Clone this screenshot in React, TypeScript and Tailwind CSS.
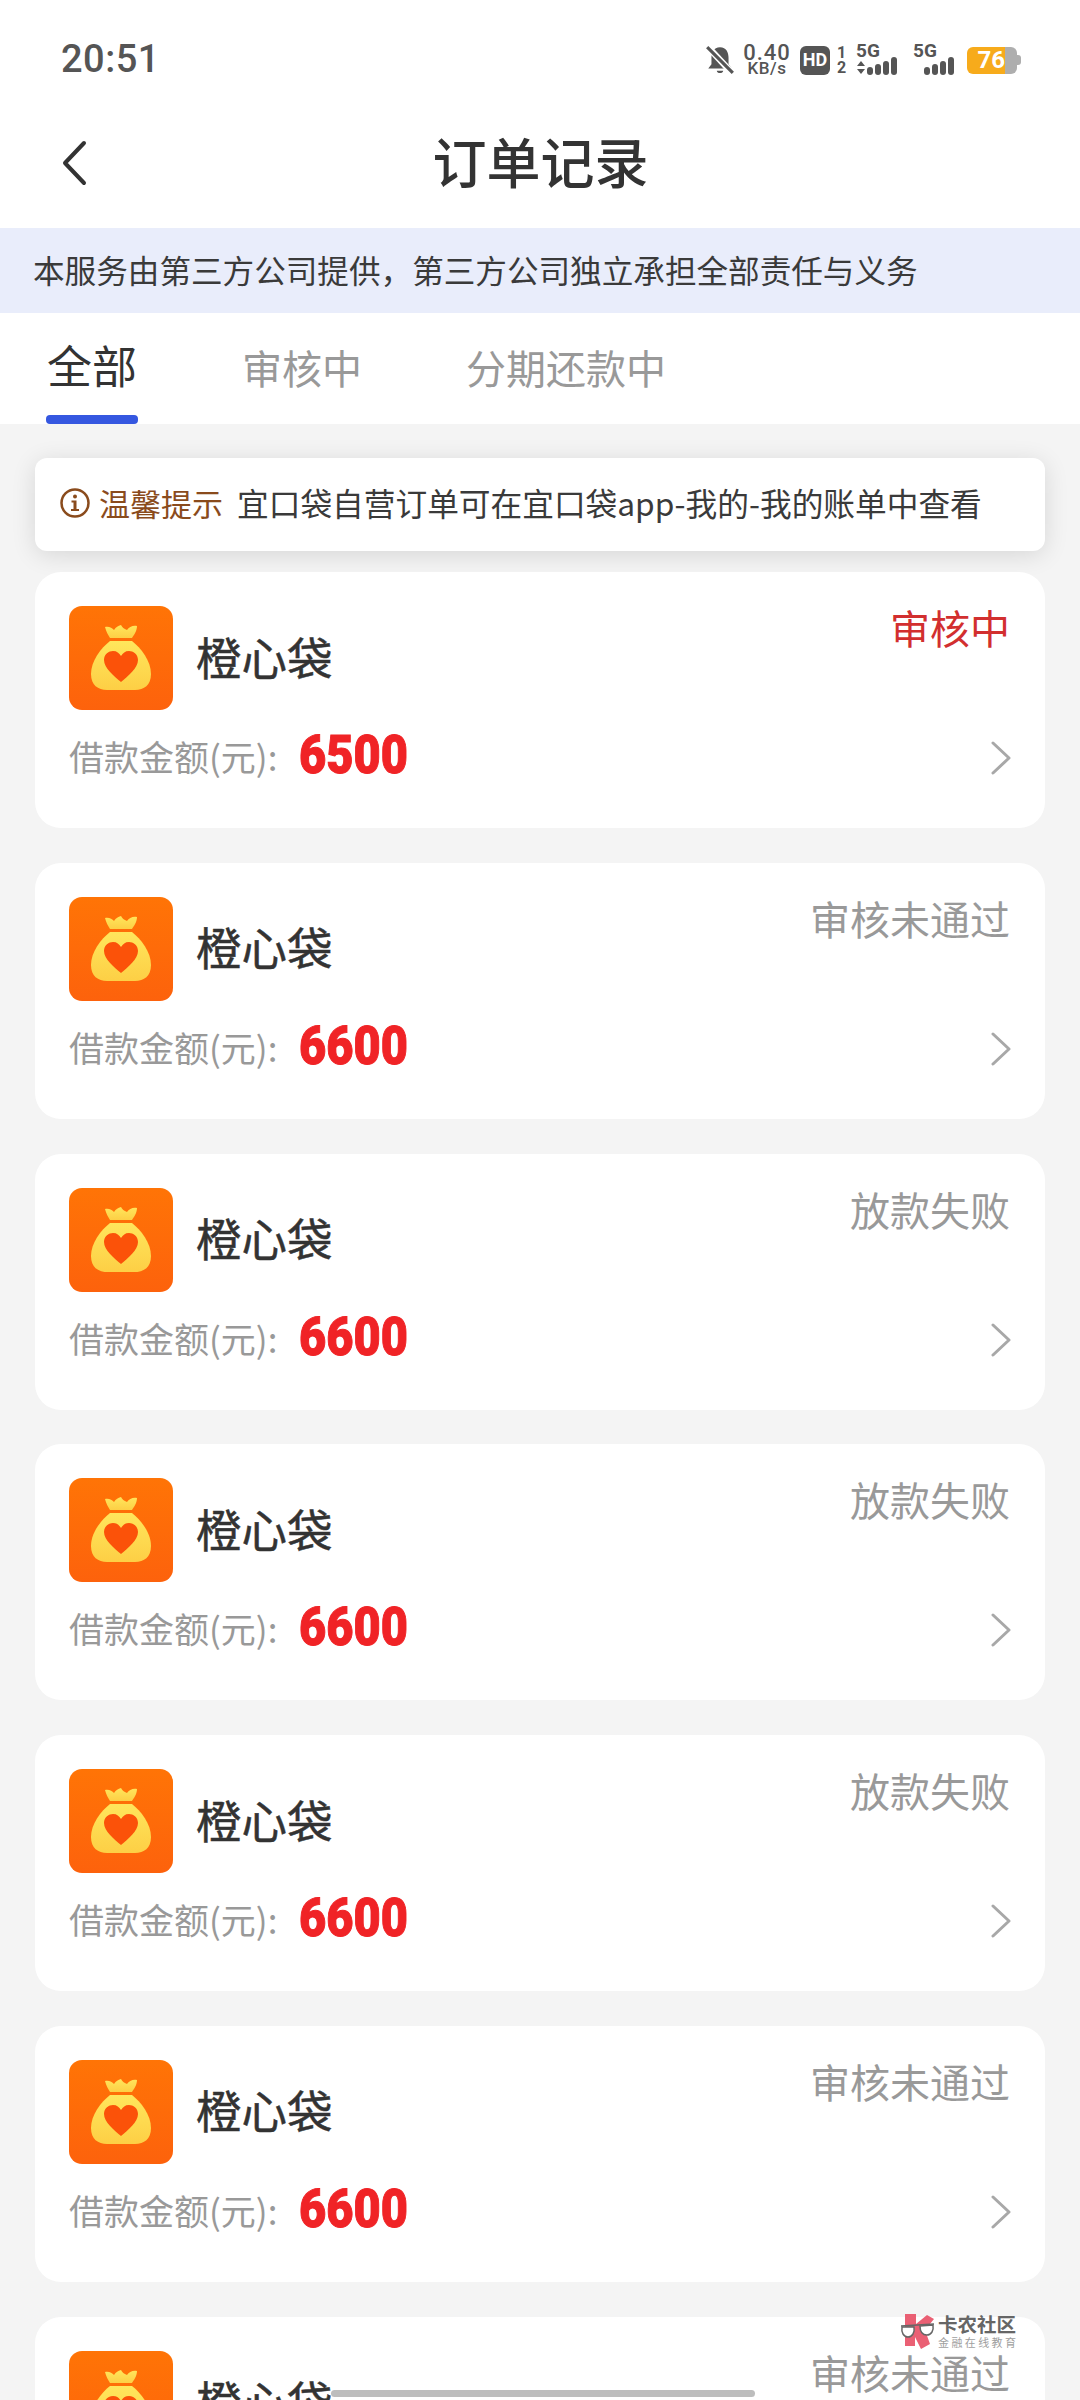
const cjk = "font-['Noto_Sans_CJK_SC','Noto_Sans',sans-serif]";

const orders = [
  { amount: '6500', status: '审核中', color: 'text-[#d22f2f]' },
  { amount: '6600', status: '审核未通过', color: 'text-[#999999]' },
  { amount: '6600', status: '放款失败', color: 'text-[#999999]' },
  { amount: '6600', status: '放款失败', color: 'text-[#999999]' },
  { amount: '6600', status: '放款失败', color: 'text-[#999999]' },
  { amount: '6600', status: '审核未通过', color: 'text-[#999999]' },
  { amount: '6600', status: '审核未通过', color: 'text-[#999999]' },
];

function BagIcon() {
  return (
    <svg width="104" height="104" viewBox="0 0 104 104" className="shrink-0">
      <defs>
        <linearGradient id="bagBg" x1="0" y1="0" x2="0" y2="1">
          <stop offset="0" stopColor="#ff7406" />
          <stop offset="1" stopColor="#fd620c" />
        </linearGradient>
        <linearGradient id="bagFill" x1="0" y1="0" x2="0" y2="1">
          <stop offset="0" stopColor="#ffe65c" />
          <stop offset="1" stopColor="#fdcf45" />
        </linearGradient>
      </defs>
      <rect width="104" height="104" rx="13" fill="url(#bagBg)" />
      <path d="M36 21 C40 20 43 22 45 24 C47 21 49 20 52 19 C53 21 55 23 58 24 C60 21 64 19 68 20 C68 25 65 29 63 32 L41 32 C39 29 37 25 36 21 Z" fill="url(#bagFill)" />
      <path d="M41 35 L63 35 C72 42 82 55 82 68 C82 79 75 84 66 84 L38 84 C29 84 22 79 22 68 C22 55 32 42 41 35 Z" fill="url(#bagFill)" />
      <path d="M52 76 C45 70 35 62 35 54 C35 48 40 45 44 45 C48 45 50 47 52 50 C54 47 56 45 60 45 C64 45 69 48 69 54 C69 62 59 70 52 76 Z" fill="#fb5209" />
    </svg>
  );
}

function Signal({ arrows }: { arrows?: boolean }) {
  return (
    <div className="relative w-[45px] h-[30px]">
      <span className="absolute left-0 top-[-4px] font-['Roboto',sans-serif] font-bold text-[19px] leading-[20px] text-[#555555]">5G</span>
      {arrows && (
        <svg width="10" height="14" viewBox="0 0 10 14" className="absolute left-0 top-[16px]">
          <path d="M5 0 L9 5 L1 5 Z M1 8 L9 8 L5 13 Z" fill="#555555" />
        </svg>
      )}
      <svg width="35" height="20" viewBox="0 0 35 20" className="absolute right-0 bottom-[-1px]">
        <rect x="1" y="11" width="6" height="8" rx="3" fill="#555555" />
        <rect x="9" y="8" width="6" height="11" rx="3" fill="#555555" />
        <rect x="17" y="5" width="6" height="14" rx="3" fill="#555555" />
        <rect x="25" y="1" width="6" height="18" rx="3" fill="#555555" />
      </svg>
    </div>
  );
}

function StatusBar() {
  return (
    <div className="h-[88px] pt-[41px] pl-[61px] pr-[60px] flex items-start justify-between">
      <span className="font-['Roboto',sans-serif] font-medium text-[38px] leading-[44px] text-[#555555] tracking-[0.5px] mt-[-4px]">20:51</span>
      <div className="flex items-center h-[30px] mt-[4px] mr-[-1px]">
        <svg width="30" height="32" viewBox="0 0 28 30" className="mr-[7px]">
          <path d="M14 3 C8 3 6 8 6 13 L6 19 L3 23 L25 23 L22 19 L22 13 C22 8 20 3 14 3 Z M11 25 C11 28 17 28 17 25 Z" fill="#555555" />
          <path d="M2 2 L26 28" stroke="#ffffff" strokeWidth="6" />
          <path d="M2 3 L26 27" stroke="#555555" strokeWidth="3" />
        </svg>
        <div className="w-[50px] flex flex-col items-center font-['Roboto',sans-serif] font-medium text-[#555555] mr-[8px]">
          <span className="text-[22px] leading-[17px] tracking-[1px]">0.40</span>
          <span className="text-[17px] leading-[15px] tracking-[0.5px]">KB/s</span>
        </div>
        <div className="w-[30px] h-[29px] rounded-[6px] bg-[#555555] flex items-center justify-center font-['Roboto',sans-serif] font-bold text-[18px] text-white leading-none mr-[6px]">HD</div>
        <div className="flex flex-col items-center font-['Roboto',sans-serif] font-bold text-[16px] leading-[15px] text-[#555555] w-[11px] mr-[9px]">
          <span>1</span>
          <span>2</span>
        </div>
        <Signal arrows />
        <div className="w-[12px]" />
        <Signal />
        <div className="w-[9px]" />
        <div className="relative w-[54px] h-[27px] flex">
          <div className="w-[38px] h-[27px] rounded-l-[6px] bg-[#f7ab1b] flex items-center justify-end font-['Roboto',sans-serif] font-bold text-[24px] leading-none text-white">76</div>
          <div className="w-[12px] h-[27px] rounded-r-[6px] bg-[#aeaeae]" />
          <div className="w-[4px] h-[10px] mt-[8px] rounded-r-[3px] bg-[#aeaeae]" />
        </div>
      </div>
    </div>
  );
}

function OrderCard({ amount, status, color }: { amount: string; status: string; color: string }) {
  return (
    <div className="relative shrink-0 h-[256px] rounded-[26px] bg-white pl-[34px] pr-[35px] pt-[34px]">
      <div className="flex items-start justify-between">
        <div className="flex items-center">
          <BagIcon />
          <span className="ml-[23px] mt-[-5px] text-[45.5px] leading-[60px] text-[#333333] [-webkit-text-stroke:0.5px_#333333]">橙心袋</span>
        </div>
        <span className={`text-[40px] leading-[46px] mt-[-2px] ${color}`}>{status}</span>
      </div>
      <div className="flex items-center justify-between mt-[16px] h-[58px]">
        <div className="flex items-center">
          <span className="text-[35px] leading-[44px] mt-[2px] text-[#999999]">借款金额(元):</span>
          <span className="ml-[22px] origin-left scale-x-[0.87] font-['Roboto',sans-serif] font-black text-[54px] leading-[58px] text-[#f02326] [-webkit-text-stroke:1px_#f02326]">{amount}</span>
        </div>
        <svg width="20" height="34" viewBox="0 0 20 34" className="mr-[-1px] mt-[6px]">
          <path d="M2 2 L18 17 L2 32" fill="none" stroke="#a8a8a8" strokeWidth="3" strokeLinecap="round" strokeLinejoin="round" />
        </svg>
      </div>
    </div>
  );
}

export default function App() {
  return (
    <div className={`relative w-[1080px] h-[2400px] overflow-hidden bg-[#f4f4f4] ${cjk}`}>
      <div className="bg-white">
        <StatusBar />
        {/* title bar */}
        <div className="relative h-[140px] flex items-center justify-center">
          <svg width="28" height="46" viewBox="0 0 28 46" className="absolute left-[60px] top-[52px]">
            <path d="M24 3 L5 23 L24 43" fill="none" stroke="#333333" strokeWidth="4" strokeLinecap="round" strokeLinejoin="round" />
          </svg>
          <span className="text-[54px] leading-[64px] font-medium text-[#333333] mr-[-1px] mb-[-6px]">订单记录</span>
        </div>
      </div>
      <div className="h-[85px] bg-[#e9edfb] flex items-center pl-[33px] pb-[2px] text-[31.6px] text-[#3a3a3a] whitespace-nowrap">
        本服务由第三方公司提供，第三方公司独立承担全部责任与义务
      </div>
      {/* tabs */}
      <div className="relative h-[111px] bg-white pl-[46px] flex items-start">
        <div className="flex flex-col items-center w-[92px]">
          <span className="text-[45px] leading-[56px] mt-[24px] text-[#333333]">全部</span>
        </div>
        <span className="ml-[104px] mt-[29px] text-[40px] leading-[50px] text-[#999999]">审核中</span>
        <span className="ml-[104px] mt-[29px] text-[40px] leading-[50px] text-[#999999]">分期还款中</span>
        <div className="absolute left-[46px] bottom-0 w-[92px] h-[9px] rounded-[4px] bg-[#3557e0]" />
      </div>
      <div className="px-[35px] pt-[34px] flex flex-col">
        {/* tip */}
        <div className="h-[93px] rounded-[12px] bg-white shadow-[0_4px_24px_rgba(0,0,0,0.12)] flex items-center pb-[3px] pl-[24px] pr-[4px] whitespace-nowrap">
          <svg width="32" height="32" viewBox="0 0 32 32" className="shrink-0">
            <circle cx="16" cy="16" r="13.5" fill="none" stroke="#8a4b1c" strokeWidth="2.5" />
            <circle cx="16" cy="9.5" r="2" fill="#8a4b1c" />
            <path d="M12.5 13.5 L17.5 13.5 L17.5 22 L20 22 L20 24 L12 24 L12 22 L14.5 22 L14.5 15.5 L12.5 15.5 Z" fill="#8a4b1c" />
          </svg>
          <span className="ml-[8px] text-[31px] text-[#8a4b1c]">温馨提示</span>
          <span className="ml-[14px] text-[31.7px] text-[#3a3a3a]">宜口袋自营订单可在宜口袋app-我的-我的账单中查看</span>
        </div>
        <div className="mt-[21px] flex flex-col gap-[34.8px]">
          {orders.map((o, i) => (
            <OrderCard key={i} amount={o.amount} status={o.status} color={o.color} />
          ))}
        </div>
      </div>

      {/* watermark */}
      <div className="absolute left-[900px] top-[2313px] flex items-start">
        <svg width="36" height="36" viewBox="0 0 36 36">
          <path d="M5 1 L16 1 L16 11 L27 2 L34 6 L25 17 L30 31 L21 36 L15 24 L15 33 L5 33 Z" fill="#ea6074" />
          <path d="M1 13 L34 11" stroke="#666666" strokeWidth="1.5" />
          <path d="M2 14 L14 14 C15 20 12 24 8 24 C4 24 1 20 2 14 Z" fill="#ffffff" stroke="#666666" strokeWidth="1.5" />
          <path d="M20 13 L33 12 C34 18 31 22 27 22 C23 22 20 19 20 13 Z" fill="#ffffff" stroke="#666666" strokeWidth="1.5" />
        </svg>
        <div className="ml-[2px] flex flex-col w-[80px]">
          <span className="text-[19.5px] leading-[22px] font-bold text-[#666666] whitespace-nowrap">卡农社区</span>
          <span className="text-[11px] leading-[14px] tracking-[2.4px] text-[#a0a0a0] whitespace-nowrap">金融在线教育</span>
        </div>
      </div>
      {/* home indicator */}
      <div className="absolute left-[331px] top-[2390px] w-[424px] h-[7px] rounded-full bg-[#bdbdbd]" />
    </div>
  );
}
